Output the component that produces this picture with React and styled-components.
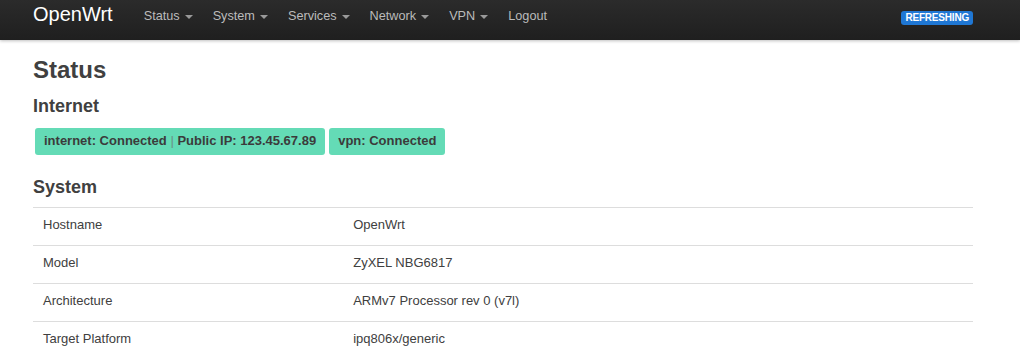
import React from "react";
import styled, { createGlobalStyle } from "styled-components";

const Global = createGlobalStyle`
  html, body { margin: 0; padding: 0; background: #fff; }
  body {
    font-family: "Liberation Sans", Arial, Helvetica, sans-serif;
    font-size: 13px;
    line-height: 18px;
    color: #404040;
  }
`;

const Navbar = styled.header`
  height: 40px;
  background: linear-gradient(to bottom, #2b2b2b, #1f1f1f);
  box-shadow: 0 1px 3px rgba(0, 0, 0, 0.25);
`;

const NavInner = styled.div`
  width: 940px;
  margin-left: 33px;
  height: 40px;
  display: flex;
  align-items: flex-start;
`;

const Brand = styled.a`
  font-size: 20px;
  line-height: 20px;
  padding-top: 4px;
  color: #fff;
  text-decoration: none;
  margin-right: 21px;
`;

const NavList = styled.ul`
  list-style: none;
  margin: 0;
  padding: 0;
  display: flex;
`;

const NavItem = styled.li`
  padding: 7px 10px 0;
  line-height: 19px;
  color: #bbb;
  font-size: 12.7px;
  white-space: nowrap;
`;

const Caret = styled.span`
  display: inline-block;
  width: 0;
  height: 0;
  margin-left: 5px;
  vertical-align: middle;
  border-top: 4px solid #999;
  border-left: 4px solid transparent;
  border-right: 4px solid transparent;
`;

const Refreshing = styled.span`
  margin-left: auto;
  margin-top: 11px;
  background: #1f77d4;
  color: #fff;
  font-weight: bold;
  font-size: 10px;
  letter-spacing: -0.2px;
  line-height: 14px;
  padding: 0 4px;
  border-radius: 3px;
  text-transform: uppercase;
`;

const Main = styled.main`
  width: 940px;
  margin-left: 33px;
  padding-top: 12px;
`;

const H2 = styled.h2`
  margin: 0;
  font-size: 24px;
  line-height: 36px;
  font-weight: bold;
  color: #404040;
`;

const H3 = styled.h3`
  margin: ${(p) => p.$top}px 0 0;
  font-size: 18px;
  line-height: 27px;
  font-weight: bold;
  color: #404040;
`;

const Badges = styled.div`
  display: flex;
  gap: 4px;
  margin-top: 8px;
  padding-left: 2px;
`;

const Badge = styled.span`
  background: #64dbb6;
  color: #3b3b3b;
  font-weight: bold;
  font-size: 13px;
  line-height: 18px;
  padding: 4px 9px 5px;
  border-radius: 3px;
`;

const Sep = styled.span`
  font-weight: normal;
  color: #6a8f84;
`;

const Table = styled.table`
  width: 100%;
  margin-top: 6px;
  border-collapse: collapse;
`;

const Cell = styled.td`
  border-top: 1px solid #ddd;
  padding: 8px 10px 11px;
  line-height: 18px;
  text-align: left;
  vertical-align: top;
  width: ${(p) => (p.$first ? "33%" : "auto")};
`;

const navItems = [
  { label: "Status", dd: true },
  { label: "System", dd: true },
  { label: "Services", dd: true },
  { label: "Network", dd: true },
  { label: "VPN", dd: true },
  { label: "Logout", dd: false },
];

const rows = [
  ["Hostname", "OpenWrt"],
  ["Model", "ZyXEL NBG6817"],
  ["Architecture", "ARMv7 Processor rev 0 (v7l)"],
  ["Target Platform", "ipq806x/generic"],
];

export default function App() {
  return (
    <>
      <Global />
      <Navbar>
        <NavInner>
          <Brand href="#">OpenWrt</Brand>
          <NavList>
            {navItems.map((n) => (
              <NavItem key={n.label}>
                {n.label}
                {n.dd && <Caret />}
              </NavItem>
            ))}
          </NavList>
          <Refreshing>Refreshing</Refreshing>
        </NavInner>
      </Navbar>
      <Main>
        <H2>Status</H2>
        <H3 $top={5}>Internet</H3>
        <Badges>
          <Badge>
            internet: Connected <Sep>|</Sep> Public IP: 123.45.67.89
          </Badge>
          <Badge>vpn: Connected</Badge>
        </Badges>
        <H3 $top={19}>System</H3>
        <Table>
          <tbody>
            {rows.map(([k, v]) => (
              <tr key={k}>
                <Cell $first>{k}</Cell>
                <Cell>{v}</Cell>
              </tr>
            ))}
          </tbody>
        </Table>
      </Main>
    </>
  );
}
